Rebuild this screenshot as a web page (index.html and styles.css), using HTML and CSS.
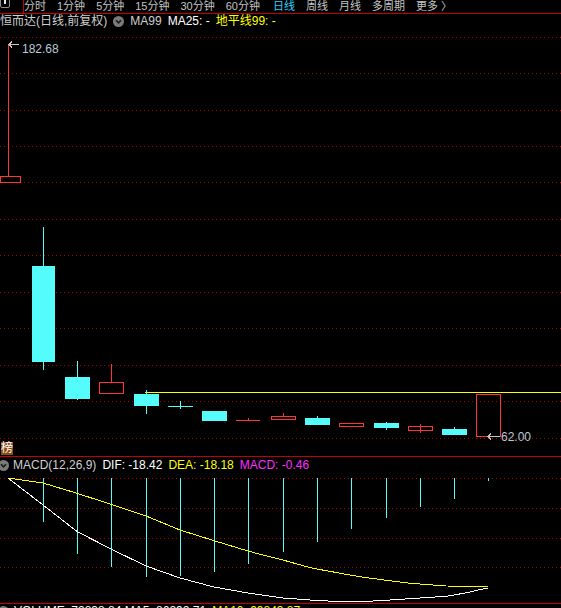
FILE: index.html
```html
<!DOCTYPE html>
<html lang="zh-CN">
<head>
<meta charset="utf-8">
<title>恒而达 K线</title>
<link rel="stylesheet" href="styles.css">
</head>
<body>
<div class="app">
  <div class="topbar">
    <div class="winbtn"><span class="winbar"></span></div>
    <div class="sep"></div>
    <nav class="tabs">
      <span class="tab">分时</span>
      <span class="tab">1分钟</span>
      <span class="tab">5分钟</span>
      <span class="tab">15分钟</span>
      <span class="tab">30分钟</span>
      <span class="tab">60分钟</span>
      <span class="tab active">日线</span>
      <span class="tab">周线</span>
      <span class="tab">月线</span>
      <span class="tab">多周期</span>
      <span class="tab">更多 〉</span>
    </nav>
  </div>

  <div class="panel main-panel">
    <svg class="chart" width="561" height="442" viewBox="0 14 561 442" shape-rendering="crispEdges">
      <g class="grid">
        <line x1="0" y1="37.5" x2="561" y2="37.5"/>
        <line x1="0" y1="73.5" x2="561" y2="73.5"/>
        <line x1="0" y1="110.5" x2="561" y2="110.5"/>
        <line x1="0" y1="146.5" x2="561" y2="146.5"/>
        <line x1="24" y1="182.5" x2="561" y2="182.5"/>
        <line x1="0" y1="219.5" x2="561" y2="219.5"/>
        <line x1="0" y1="255.5" x2="561" y2="255.5"/>
        <line x1="0" y1="292.5" x2="561" y2="292.5"/>
        <line x1="0" y1="328.5" x2="561" y2="328.5"/>
        <line x1="0" y1="365.5" x2="561" y2="365.5"/>
        <line x1="0" y1="401.5" x2="561" y2="401.5"/>
        <line x1="0" y1="438.5" x2="561" y2="438.5"/>
      </g>

      <line class="flat" x1="145" y1="392.5" x2="561" y2="392.5"/>

      <g class="up">
        <line x1="8.5" y1="44" x2="8.5" y2="176"/>
        <rect x="0.5" y="176.5" width="20" height="6"/>
        <line x1="111.5" y1="364" x2="111.5" y2="382"/>
        <rect x="99.5" y="382.5" width="24" height="11"/>
        <line x1="236" y1="420.5" x2="260" y2="420.5"/>
        <line x1="248.5" y1="418" x2="248.5" y2="420"/>
        <line x1="283.5" y1="413" x2="283.5" y2="416"/>
        <rect x="271.5" y="416.5" width="24" height="3"/>
        <rect x="339.5" y="423.5" width="24" height="3"/>
        <line x1="420.5" y1="424" x2="420.5" y2="433"/>
        <rect x="408.5" y="426.5" width="24" height="4"/>
        <rect x="476.5" y="394.5" width="24" height="42"/>
      </g>

      <g class="down">
        <line x1="43.5" y1="227" x2="43.5" y2="370"/>
        <rect x="32" y="266" width="23" height="96"/>
        <line x1="77.5" y1="361" x2="77.5" y2="400"/>
        <rect x="65" y="377" width="25" height="22"/>
        <line x1="146.5" y1="390" x2="146.5" y2="414"/>
        <rect x="134" y="394" width="25" height="12"/>
        <line x1="168" y1="406.5" x2="193" y2="406.5"/>
        <line x1="180.5" y1="401" x2="180.5" y2="409"/>
        <rect x="202" y="411" width="25" height="10"/>
        <line x1="317.5" y1="416" x2="317.5" y2="418"/>
        <rect x="305" y="418" width="25" height="7"/>
        <line x1="386.5" y1="422" x2="386.5" y2="430"/>
        <rect x="374" y="423" width="25" height="5"/>
        <line x1="454.5" y1="427" x2="454.5" y2="429"/>
        <rect x="442" y="429" width="25" height="6"/>
      </g>

      <g class="pointer">
        <polyline points="12,41.5 9,44.5 12,47.5"/>
        <line x1="9" y1="44.5" x2="19" y2="44.5"/>
        <polyline points="491,433.5 488,436.5 491,439.5"/>
        <line x1="488" y1="436.5" x2="500" y2="436.5"/>
      </g>
      <text class="price" x="22" y="53">182.68</text>
      <text class="price" x="501" y="441">62.00</text>
    </svg>

    <div class="legend">
      <span class="name">恒而达(日线,前复权)</span>
      <span class="dropicon"><svg width="11" height="11" viewBox="0 0 11 11"><circle cx="5.5" cy="5.5" r="5.5" fill="#7a7a7a"/><polyline points="3,4.3 5.5,6.8 8,4.3" fill="none" stroke="#1a1a1a" stroke-width="1.6"/></svg></span>
      <span class="ma99">MA99</span>
      <span class="ma25">MA25: -</span>
      <span class="horizon">地平线99: -</span>
    </div>
    <div class="badge">榜</div>
  </div>

  <div class="panel macd-panel">
    <svg class="chart" width="561" height="146" viewBox="0 457 561 146" shape-rendering="crispEdges">
      <g class="grid">
        <line x1="0" y1="478.5" x2="561" y2="478.5"/>
        <line x1="0" y1="508.5" x2="561" y2="508.5"/>
        <line x1="0" y1="538.5" x2="561" y2="538.5"/>
        <line x1="0" y1="567.5" x2="561" y2="567.5"/>
      </g>
      <g class="bars">
        <line x1="43.5" y1="478" x2="43.5" y2="522"/>
        <line x1="77.5" y1="478" x2="77.5" y2="554"/>
        <line x1="111.5" y1="478" x2="111.5" y2="567"/>
        <line x1="146.5" y1="478" x2="146.5" y2="577"/>
        <line x1="180.5" y1="478" x2="180.5" y2="576"/>
        <line x1="214.5" y1="478" x2="214.5" y2="572"/>
        <line x1="248.5" y1="478" x2="248.5" y2="564"/>
        <line x1="283.5" y1="478" x2="283.5" y2="552"/>
        <line x1="317.5" y1="478" x2="317.5" y2="542"/>
        <line x1="351.5" y1="478" x2="351.5" y2="529"/>
        <line x1="386.5" y1="478" x2="386.5" y2="518"/>
        <line x1="420.5" y1="478" x2="420.5" y2="507"/>
        <line x1="454.5" y1="478" x2="454.5" y2="499"/>
        <line x1="488.5" y1="478" x2="488.5" y2="481"/>
      </g>
      <polyline class="dea" points="8,478 43,483 77,493.3 111,504.3 146,516 180,530 214,540.7 248,551 260,554.3 283,560 310,567.7 317,569 351,575.2 360,576.7 386,580.3 410,583.3 424,584.3 446,586 488,586.3"/>
      <polyline class="dif" points="8,478 43,505 77,531.5 111,549 146,566 180,578 214,587 248,593 283,598 317,600.5 335,601.3 368,601.3 386,600.3 400,599.3 420,598 446,596.3 457,594.5 470,592 480,589.5 488,588"/>
    </svg>

    <div class="legend macd-legend">
      <span class="dropicon edge"><svg width="11" height="11" viewBox="0 0 11 11"><circle cx="5.5" cy="5.5" r="5.5" fill="#7a7a7a"/><polyline points="3,4.3 5.5,6.8 8,4.3" fill="none" stroke="#1a1a1a" stroke-width="1.6"/></svg></span>
      <span class="ind">MACD(12,26,9)</span>
      <span class="dif-t">DIF: -18.42</span>
      <span class="dea-t">DEA: -18.18</span>
      <span class="macd-t">MACD: -0.46</span>
    </div>
  </div>

  <div class="volrow">
    <span class="dropicon edge"><svg width="11" height="11" viewBox="0 0 11 11"><circle cx="5.5" cy="5.5" r="5.5" fill="#7a7a7a"/></svg></span>
    <span class="vol-w">VOLUME: 72838.84 MA5: 86292.71</span>
    <span class="vol-y">MA10: 99843.87</span>
  </div>
</div>
</body>
</html>
```

FILE: styles.css
```css
html, body {
  margin: 0;
  padding: 0;
  background: #000;
  overflow: hidden;
}

.app {
  width: 561px;
  height: 608px;
  overflow: hidden;
  background: #000;
  font-family: "Liberation Sans", "Noto Sans CJK SC", sans-serif;
  font-size: 12px;
  color: #c8c8c8;
}

/* top period bar */
.topbar {
  display: flex;
  height: 13px;
  border-bottom: 1px solid #c40000;
  overflow: hidden;
}

.winbtn {
  position: relative;
  width: 8px;
  height: 9px;
  margin-top: -3px;
  border: 1px solid #8c8c8c;
  border-radius: 2px;
  margin-right: 13px;
  flex: none;
}

.winbar {
  position: absolute;
  left: 3px;
  top: 0;
  width: 2px;
  height: 6px;
  background: #e8e8e8;
}

.sep {
  width: 1px;
  height: 13px;
  background: #c40000;
  flex: none;
}

.tabs {
  display: flex;
  gap: 11px;
  padding-left: 0;
  font-size: 11px;
  line-height: 12px;
  margin-top: 0;
  white-space: nowrap;
}

.tab {
  color: #c4c4c4;
}

.tab.active {
  color: #2ccfff;
  margin-left: 2px;
}

/* panels */
.panel {
  position: relative;
  overflow: hidden;
}

.main-panel {
  height: 442px;
  border-bottom: 1px solid #c40000;
}

.macd-panel {
  height: 146px;
  border-bottom: 1px solid #c40000;
}

.chart {
  display: block;
}

.grid line {
  stroke: #b00000;
  stroke-width: 1;
  stroke-dasharray: 1 3;
}

.flat {
  stroke: #ffff00;
  stroke-width: 1;
}

.up line,
.up rect {
  stroke: #ff3535;
  stroke-width: 1;
  fill: none;
}

.down line {
  stroke: #54fcfc;
  stroke-width: 1;
}

.down rect {
  fill: #54fcfc;
}

.pointer line,
.pointer polyline {
  stroke: #c8c8c8;
  stroke-width: 1;
  fill: none;
}

.price {
  font-family: "Liberation Sans", sans-serif;
  font-size: 12px;
  fill: #bcc8d8;
}

.bars line {
  stroke: #54fcfc;
  stroke-width: 1;
}

.dea {
  fill: none;
  stroke: #ffff00;
  stroke-width: 1;
}

.dif {
  fill: none;
  stroke: #ffffff;
  stroke-width: 1;
}

/* legends overlaid on chart panels */
.legend {
  position: absolute;
  left: 0;
  top: 0;
  display: flex;
  align-items: center;
  gap: 6px;
  height: 14px;
  line-height: 14px;
  white-space: nowrap;
}

.name {
  color: #cfcfcf;
}

.dropicon {
  display: flex;
  width: 11px;
  height: 11px;
}

.ma99 {
  color: #cfcfcf;
}

.ma25 {
  color: #ffffff;
}

.horizon {
  color: #ffff00;
}

.macd-legend {
  height: 16px;
  line-height: 16px;
}

.dropicon.edge {
  margin-left: -2px;
  margin-right: 0;
}

.ind {
  color: #cfcfcf;
  margin-left: -2px;
}

.dif-t {
  color: #ffffff;
}

.dea-t {
  color: #ffff00;
}

.macd-t {
  color: #ff2cff;
}

.badge {
  position: absolute;
  left: 1px;
  top: 428px;
  width: 12px;
  height: 13px;
  background: #8d4a12;
  color: #ffffff;
  font-size: 12px;
  line-height: 13px;
  text-align: center;
}

/* volume legend (mostly cut off) */
.volrow {
  display: flex;
  align-items: center;
  gap: 6px;
  height: 14px;
  line-height: 14px;
  white-space: nowrap;
}

.vol-w {
  color: #ffffff;
  margin-left: -1px;
}

.vol-y {
  color: #ffff00;
}
```
